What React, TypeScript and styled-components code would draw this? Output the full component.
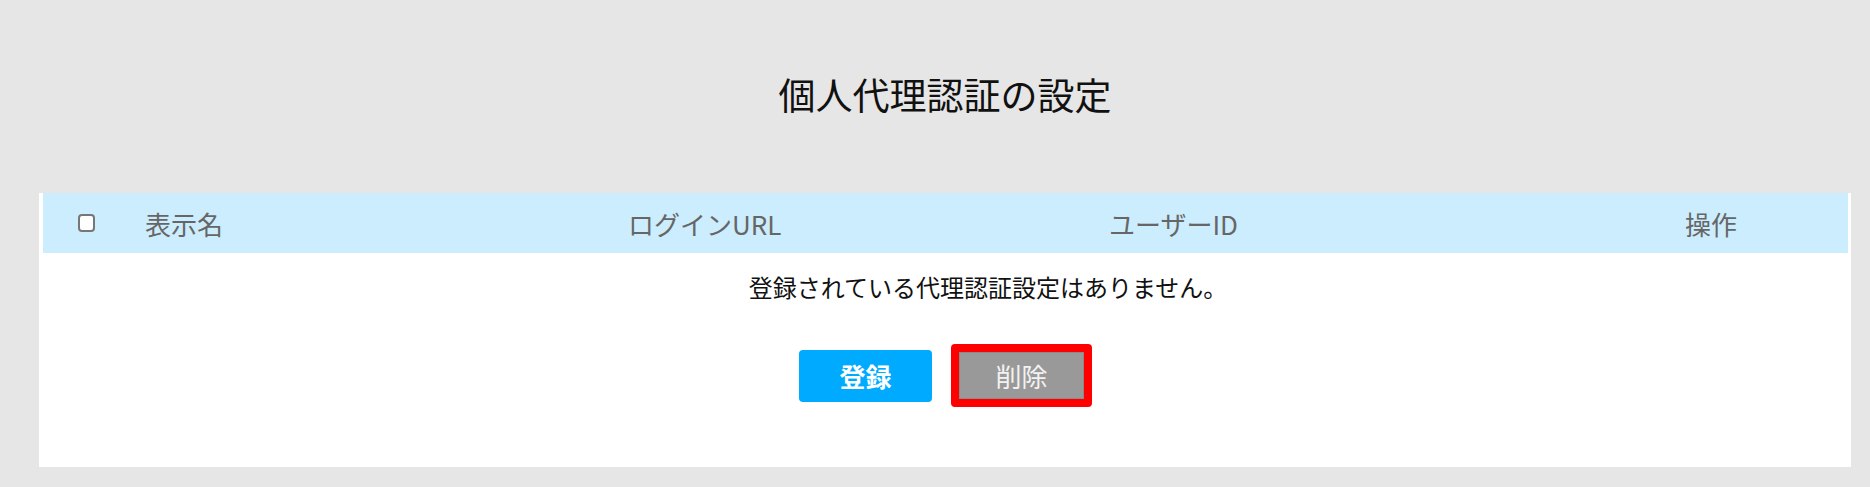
import styled, { createGlobalStyle } from "styled-components";

const GlobalStyle = createGlobalStyle`
  body {
    margin: 0;
    background: #e6e6e6;
    font-family: "Noto Sans CJK JP", "Noto Sans", sans-serif;
  }
`;

const columns = "77px 483px 481px 576px 1fr";

const Page = styled.div`
  padding: 0 19px 16px 39px;
`;

const TitleBar = styled.div`
  height: 193px;
  display: flex;
  align-items: center;
  justify-content: center;
  padding-bottom: 4px;
  box-sizing: border-box;
`;

const Title = styled.h1`
  margin: 0;
  font-size: 37px;
  font-weight: 400;
  line-height: 1.4;
  color: #111;
`;

const Panel = styled.div`
  background: #fff;
  height: 274px;
  padding: 0 3px 0 4px;
  box-sizing: border-box;
`;

const HeadRow = styled.div`
  display: grid;
  grid-template-columns: ${columns};
  height: 60px;
  align-items: center;
  background: #ccedfd;
`;

const HeadCell = styled.div`
  padding-left: 25px;
  font-size: 26px;
  color: #666;
  white-space: nowrap;
`;

const CheckCell = styled.div`
  padding-left: 35px;
  display: flex;
  align-items: center;
`;

const Check = styled.input`
  appearance: none;
  margin: 0;
  width: 17px;
  height: 18px;
  border: 2px solid #767676;
  border-radius: 4px;
  background: #fff;
  box-sizing: border-box;
`;

const EmptyRow = styled.div`
  display: grid;
  grid-template-columns: ${columns};
  padding-top: 17px;
`;

const EmptyText = styled.div`
  grid-column: 2 / -1;
  padding-left: 8px;
  text-align: center;
  font-size: 24px;
  line-height: 34px;
  color: #111;
`;

const Actions = styled.div`
  display: flex;
  justify-content: center;
  align-items: center;
  gap: 19px;
  margin-top: 40px;
`;

const BaseButton = styled.button`
  font-family: inherit;
  font-size: 26px;
  line-height: 1;
  box-sizing: border-box;
  border-radius: 4px;
  cursor: pointer;
  padding: 0;
`;

const RegisterButton = styled(BaseButton)`
  width: 133px;
  height: 52px;
  border: none;
  background: #00aaff;
  color: #fff;
  font-weight: 700;
`;

const DeleteButton = styled(BaseButton)`
  width: 141px;
  height: 63px;
  border: 8px solid #ff0000;
  background: #999;
  color: #f2f2f2;
  font-weight: 400;
  box-shadow: inset 0 0 0 1px #8a8a8a;
`;

export default function App() {
  return (
    <>
      <GlobalStyle />
      <Page>
        <TitleBar>
          <Title>個人代理認証の設定</Title>
        </TitleBar>
        <Panel>
          <HeadRow>
            <CheckCell>
              <Check type="checkbox" />
            </CheckCell>
            <HeadCell>表示名</HeadCell>
            <HeadCell>ログインURL</HeadCell>
            <HeadCell>ユーザーID</HeadCell>
            <HeadCell>操作</HeadCell>
          </HeadRow>
          <EmptyRow>
            <EmptyText>登録されている代理認証設定はありません。</EmptyText>
          </EmptyRow>
          <Actions>
            <RegisterButton>登録</RegisterButton>
            <DeleteButton>削除</DeleteButton>
          </Actions>
        </Panel>
      </Page>
    </>
  );
}
